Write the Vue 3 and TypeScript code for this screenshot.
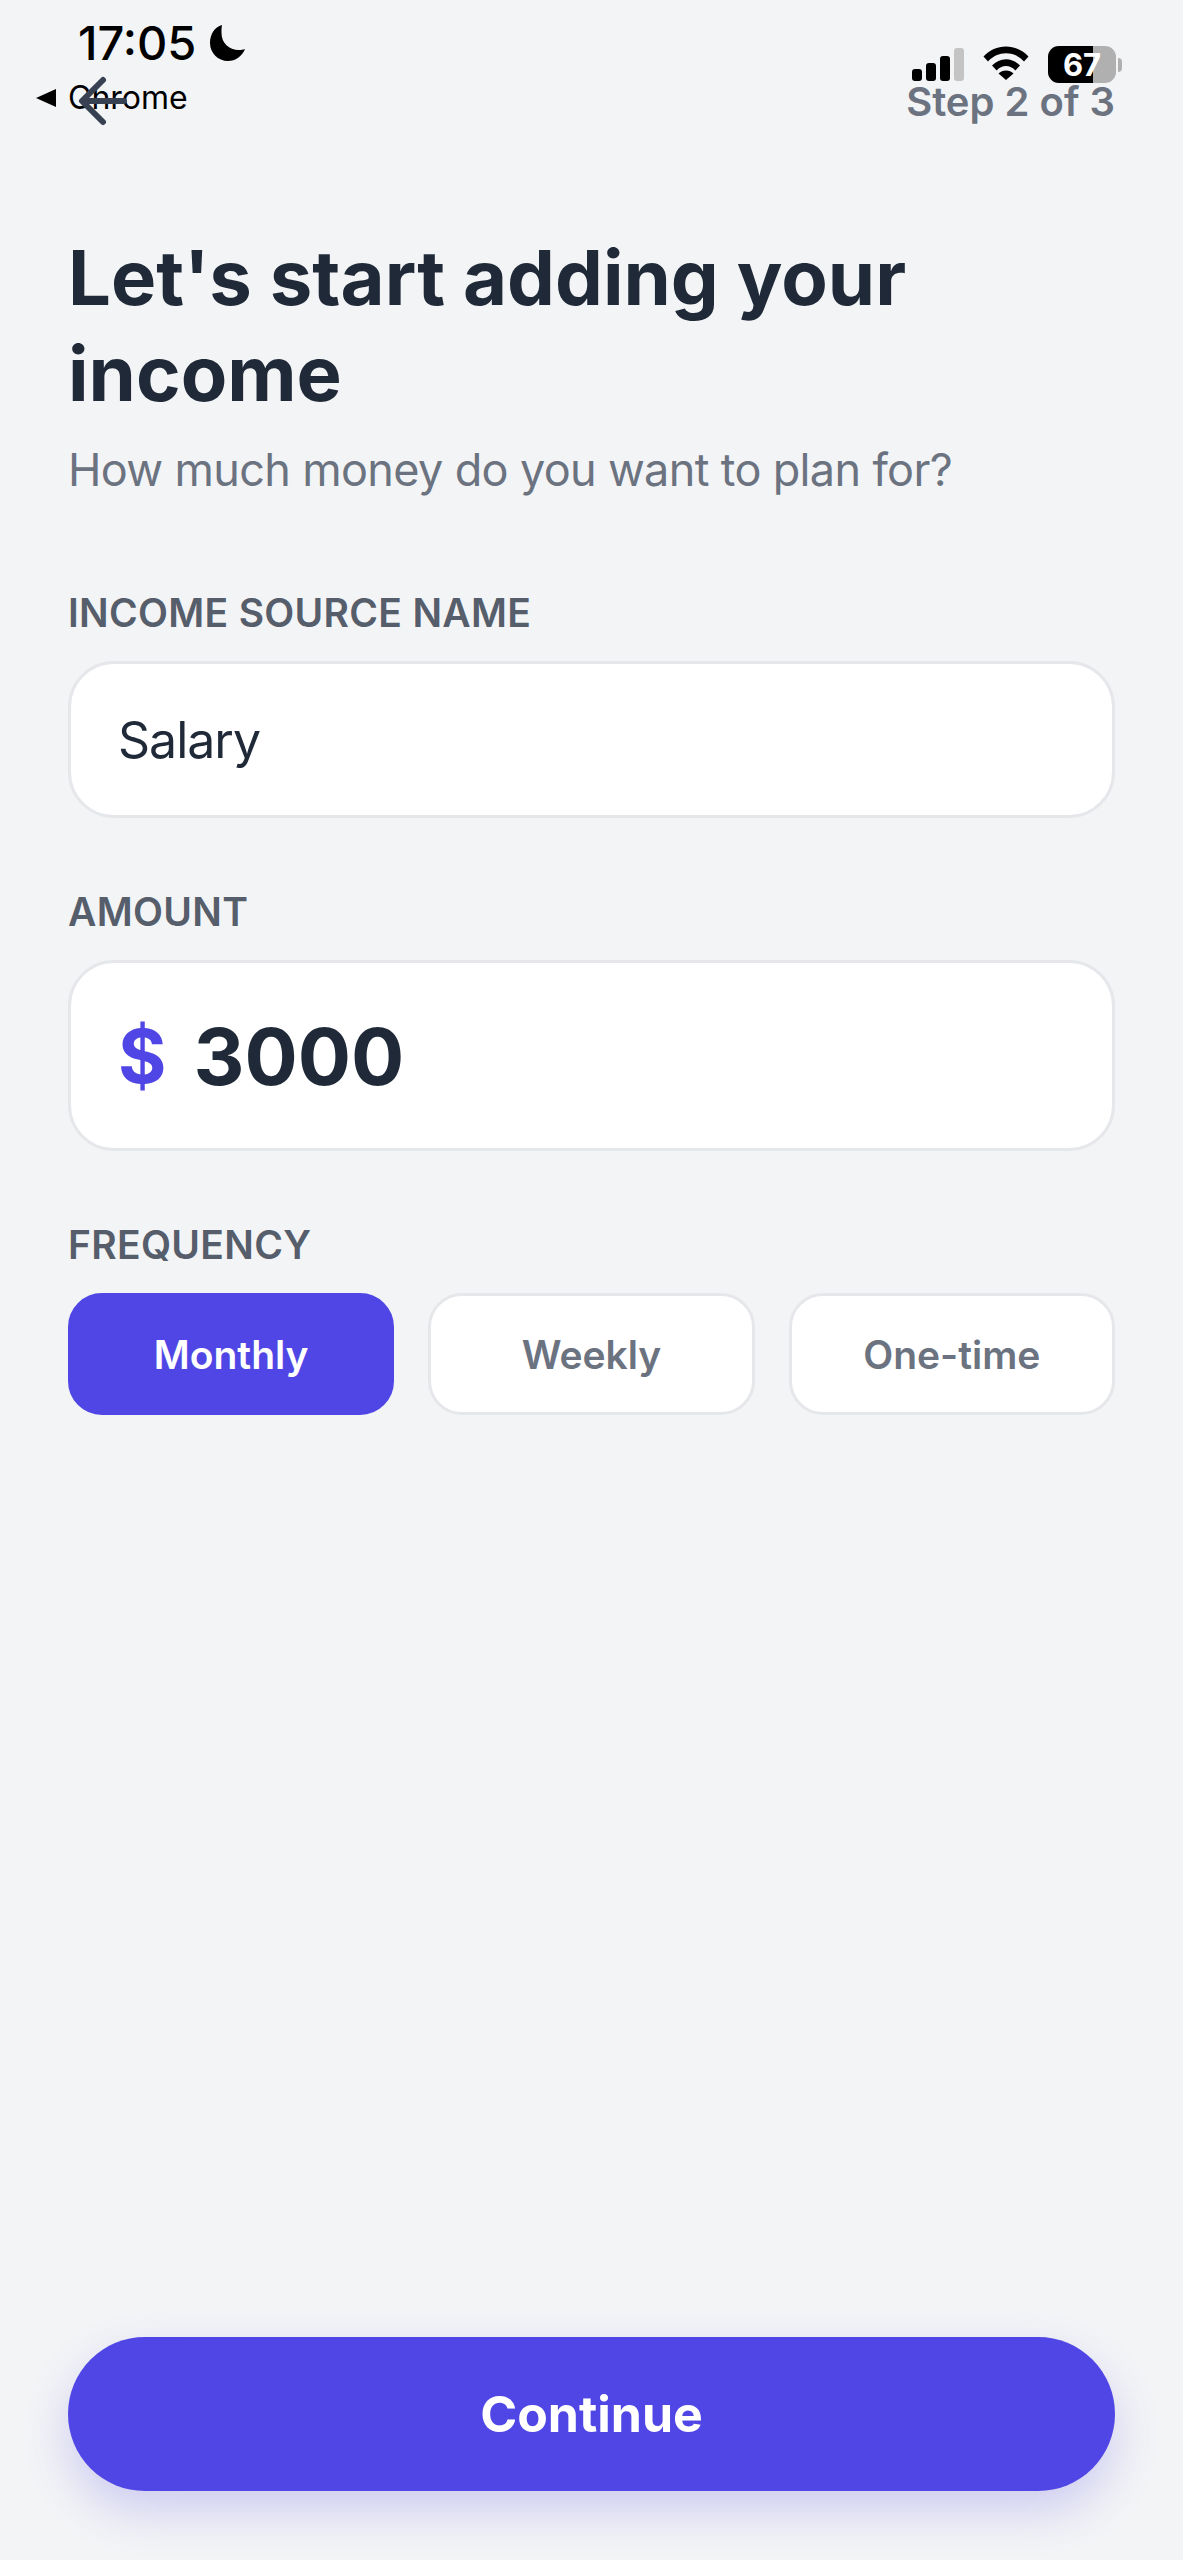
<template>
  <div class="page">
    <div class="status">
      <div class="status__left">
        <div class="status__time">
          <span>17:05</span>
          <svg class="moon" viewBox="0 0 36 36" width="36" height="36">
            <path d="M12 0C4.500 2 0 9.500 0 18c0 10 8 18 18 18 7.500 0 14-4.500 17-12-2 .8-4 1-6 1C19 25 11.500 18 11.500 8c0-3 0-5.500.5-8z" fill="#000" />
          </svg>
        </div>
        <div class="status__back">
          <svg viewBox="0 0 20 18" width="20" height="18"><path d="M0 9 20 0v18z" fill="#000" /></svg>
          <span>Chrome</span>
        </div>
      </div>
      <div class="status__right">
        <div class="signal">
          <i class="signal__bar signal__bar--1"></i>
          <i class="signal__bar signal__bar--2"></i>
          <i class="signal__bar signal__bar--3"></i>
          <i class="signal__bar signal__bar--off"></i>
        </div>
        <svg class="wifi" viewBox="0 0 46 34" width="46" height="34">
          <path d="M0.500 10.500C6.500 4 14.500 .5 23 .5s16.500 3.500 22.500 10l-4.500 5C36 10 29.800 7.200 23 7.200S10 10 5 15.500z" fill="#000" />
          <path d="M9 19.500c3.800-4 8.700-6.300 14-6.300s10.200 2.300 14 6.300l-4.700 5c-2.500-2.800-5.700-4.400-9.300-4.400s-6.800 1.600-9.300 4.400z" fill="#000" />
          <path d="M15.500 27.500c2-1.900 4.600-3 7.500-3s5.500 1.100 7.500 3L23 34z" fill="#000" />
        </svg>
        <div class="battery">
          <div class="battery__body">
            <div class="battery__fill"></div>
            <span class="battery__num">67</span>
          </div>
          <div class="battery__cap"></div>
        </div>
      </div>
    </div>

    <header class="topbar">
      <svg class="back" viewBox="0 0 50 50" width="50" height="50">
        <path d="M46 25H5M25 4 4 25l21 21" fill="none" stroke="#374151" stroke-width="6" stroke-linecap="round" stroke-linejoin="round" />
      </svg>
      <span class="step">Step 2 of 3</span>
    </header>

    <h1 class="title">Let's start adding your income</h1>
    <p class="subtitle">How much money do you want to plan for?</p>

    <label class="label label--first">INCOME SOURCE NAME</label>
    <div class="field field--name">Salary</div>

    <label class="label">AMOUNT</label>
    <div class="field field--amount">
      <span class="currency">$</span>
      <span class="amount">3000</span>
    </div>

    <label class="label">FREQUENCY</label>
    <div class="pills">
      <button
        v-for="f in frequencies"
        :key="f"
        type="button"
        class="pill"
        :class="{ 'pill--active': f === selected }"
        @click="selected = f"
      >{{ f }}</button>
    </div>

    <button type="button" class="continue">Continue</button>
  </div>
</template>

<script setup lang="ts">
import { ref } from 'vue';

const frequencies = ['Monthly', 'Weekly', 'One-time'];
const selected = ref('Monthly');
</script>

<style>
html,
body {
  margin: 0;
  background: #f3f4f6;
}
</style>

<style scoped>
.page {
  position: relative;
  box-sizing: border-box;
  width: 1183px;
  height: 2560px;
  padding: 76px 68px 69px;
  display: flex;
  flex-direction: column;
  background: #f3f4f6;
  font-family: Inter, "Liberation Sans", sans-serif;
  overflow: hidden;
}
.status {
  position: absolute;
  top: 0;
  left: 0;
  right: 0;
  height: 130px;
  color: #000;
}
.status__left {
  position: absolute;
  left: 36px;
  top: 20px;
}
.status__time {
  display: flex;
  align-items: center;
  gap: 14px;
  margin-left: 42px;
  font-size: 47px;
  line-height: 46px;
  font-weight: 500;
}
.status__back {
  display: flex;
  align-items: center;
  gap: 12px;
  margin-top: 12px;
  font-size: 32px;
  line-height: 40px;
}
.status__right {
  position: absolute;
  left: 912px;
  top: 46px;
  display: flex;
  align-items: flex-start;
}
.signal {
  display: flex;
  align-items: flex-end;
  gap: 4px;
  height: 33px;
  margin-top: 2px;
}
.signal__bar {
  width: 10px;
  border-radius: 3px;
  background: #000;
}
.signal__bar--1 {
  height: 12px;
}
.signal__bar--2 {
  height: 18px;
}
.signal__bar--3 {
  height: 25px;
}
.signal__bar--off {
  height: 33px;
  background: #c4c4c4;
}
.wifi {
  margin-left: 19px;
}
.battery {
  display: flex;
  align-items: center;
  margin-left: 19px;
}
.battery__body {
  position: relative;
  width: 68px;
  height: 37px;
  border-radius: 11px;
  background: #b0b0b0;
}
.battery__fill {
  width: 45px;
  height: 100%;
  border-radius: 11px 0 0 11px;
  background: #000;
}
.battery__num {
  position: absolute;
  inset: 0;
  text-align: center;
  color: #fff;
  font-size: 31px;
  font-weight: 700;
  line-height: 37px;
}
.battery__cap {
  width: 4px;
  height: 14px;
  margin-left: 2px;
  border-radius: 0 4px 4px 0;
  background: #b0b0b0;
}
.topbar {
  position: relative;
  display: flex;
  align-items: center;
  justify-content: space-between;
  height: 50px;
}
.back {
  margin-left: 10px;
}
.step {
  font-size: 40px;
  font-weight: 600;
  color: #6b7280;
}
.title {
  margin: 103px 0 0;
  font-size: 76px;
  line-height: 96px;
  font-weight: 700;
  color: #1f2937;
}
.subtitle {
  margin: 15px 0 0;
  font-size: 45px;
  line-height: 68px;
  letter-spacing: -0.65px;
  color: #6b7280;
}
.label {
  display: block;
  margin-top: 70px;
  font-size: 39px;
  line-height: 48px;
  font-weight: 600;
  letter-spacing: 0.3px;
  color: #565d6b;
}
.label--first {
  margin-top: 85px;
}
.field {
  box-sizing: border-box;
  display: flex;
  align-items: center;
  margin-top: 24px;
  padding: 0 47px;
  background: #fff;
  border: 3px solid #e5e7eb;
  border-radius: 46px;
}
.field--name {
  height: 157px;
  font-size: 50px;
  letter-spacing: -1px;
  color: #1f2937;
}
.field--amount {
  height: 191px;
  gap: 27px;
}
.currency {
  font-size: 74px;
  font-weight: 700;
  color: #4f46e5;
}
.amount {
  font-size: 79px;
  font-weight: 700;
  color: #1f2937;
}
.pills {
  display: flex;
  gap: 34px;
  margin-top: 24px;
}
.pill {
  flex: 1;
  height: 122px;
  font-family: inherit;
  font-size: 39px;
  font-weight: 600;
  color: #6b7280;
  background: #fff;
  border: 3px solid #e5e7eb;
  border-radius: 34px;
  cursor: pointer;
}
.pill--active {
  color: #fff;
  background: #4f46e5;
  border-color: #4f46e5;
}
.continue {
  margin-top: auto;
  height: 154px;
  font-family: inherit;
  font-size: 50px;
  font-weight: 700;
  color: #fff;
  background: #4f46e5;
  border: none;
  border-radius: 77px;
  box-shadow: 0 20px 45px rgba(79, 70, 229, 0.22);
  cursor: pointer;
}
</style>
